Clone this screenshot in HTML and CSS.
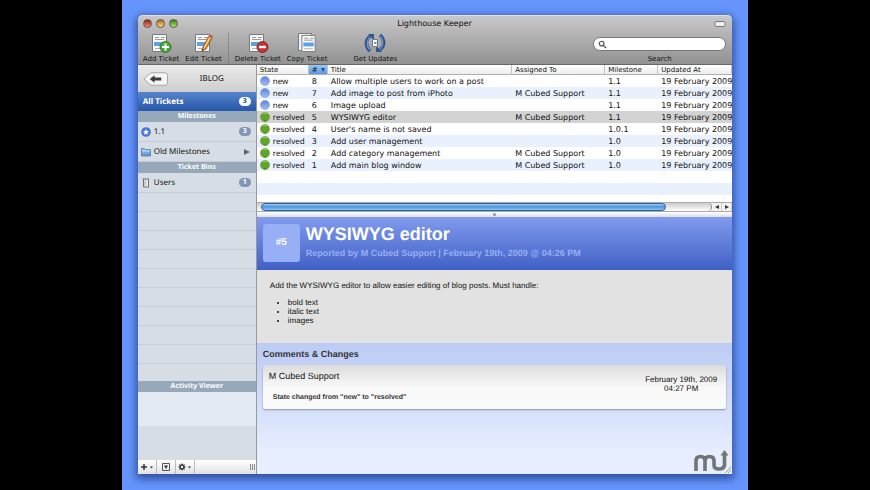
FILE: index.html
```html
<!DOCTYPE html>
<html lang="en">
<head>
<meta charset="utf-8">
<title>Lighthouse Keeper</title>
<link rel="stylesheet" href="styles.css">
</head>
<body>
<svg class="defs" aria-hidden="true">
  <defs>
    <linearGradient id="orb" x1="0" y1="0" x2="0" y2="1"><stop offset="0" stop-color="#5f84dc"/><stop offset="1" stop-color="#a3bdf8"/></linearGradient>
    <linearGradient id="fold" x1="0" y1="0" x2="0" y2="1"><stop offset="0" stop-color="#a9cbee"/><stop offset="1" stop-color="#5c8fcc"/></linearGradient>
    <symbol id="page" viewBox="0 0 20 20">
      <path d="M2.500 1.500h14v17h-14z" fill="#f8f8f8" stroke="#77797c"/>
      <path d="M5 4.500h4M11 4.500h4M5 6.500h9" stroke="#9a9a9a"/>
      <path d="M4 9h11v4H4z" fill="#5da0e4"/>
      <path d="M5 15.500h9" stroke="#b0b0b0"/>
    </symbol>
    <symbol id="new" viewBox="0 0 10 10"><circle cx="5" cy="5" r="4.500" fill="url(#orb)" stroke="#6d8dda" stroke-width=".5"/></symbol>
    <symbol id="resolved" viewBox="0 0 10 10"><circle cx="5" cy="5" r="4.600" fill="#5fa52c" stroke="#7f9a3c" stroke-width=".6"/><path d="M3 1.500h4" stroke="#9acb62"/><path d="M4.500 9h1" stroke="#24500c"/></symbol>
  </defs>
</svg>
<div class="desktop">
<main class="window">
  <header class="chrome">
    <div class="titlebar">
      <div class="lights"><button class="light red" aria-label="Close"></button><button class="light yellow" aria-label="Minimize"></button><button class="light green" aria-label="Zoom"></button></div>
      <h1>Lighthouse Keeper</h1>
      <button class="pill" aria-label="Toggle toolbar"></button>
    </div>
    <div class="toolbar">
      <button class="tool"><svg viewBox="0 0 22 20"><use href="#page" width="20" height="20"/><circle cx="15.500" cy="14" r="5.500" fill="#4ba63b" stroke="#2f7d27"/><path d="M15.500 10.500v7M12 14h7" stroke="#fff" stroke-width="2"/></svg>Add Ticket</button>
      <button class="tool"><svg viewBox="0 0 22 20"><use href="#page" width="20" height="20"/><path d="M9 18l1-4 6-11 3 2-6 11z" fill="#e99a36" stroke="#854a20" stroke-width=".8"/><path d="M11.500 14.500l5.500-10.500" stroke="#ffe48c"/><path d="M16 3l1-1.500 3 1.500-1 2z" fill="#d45045"/><path d="M9 18l.5-2 1.200.8z" fill="#222"/></svg>Edit Ticket</button>
      <span class="divider"></span>
      <button class="tool"><svg viewBox="0 0 22 20"><use href="#page" width="20" height="20"/><circle cx="15.500" cy="14" r="5.500" fill="#c23530" stroke="#8f2522"/><path d="M12 14h7" stroke="#fff" stroke-width="2.400"/></svg>Delete Ticket</button>
      <button class="tool"><svg viewBox="0 0 22 20"><path d="M2.500.5h13v17h-13z" fill="#f3f3f3" stroke="#77797c"/><path d="M5 3.500h7" stroke="#aaa"/><use href="#page" x="3" y="1" width="20" height="19"/></svg>Copy Ticket</button>
      <button class="tool updates"><svg viewBox="0 0 22 20"><path d="M7 3C1 6 1 13 6 18M15 17c6-3 6-10 1-15" fill="none" stroke="#2e4f88" stroke-width="3.500"/><path d="M7 3C2 7 2 13 6 17M15 17c5-4 5-10 1-14" fill="none" stroke="#6c9ad8" stroke-width="1.200"/><path d="M4 1h6v6zM18 19h-6v-6z" fill="#31578f"/><path d="M8.500 6.500h5v7h-5z" fill="#fff" stroke="#777"/><path d="M10 10h2.500" stroke="#5da0e4" stroke-width="2"/></svg>Get Updates</button>
      <div class="search"><div class="field"><svg viewBox="0 0 10 10"><circle cx="4" cy="4" r="2.600" fill="none" stroke="#555" stroke-width="1.300"/><path d="M6 6l3 3" stroke="#555" stroke-width="1.500"/></svg><input id="q" type="text"></div><label for="q">Search</label></div>
    </div>
  </header>
  <div class="content">
    <nav class="sidebar">
      <div class="project"><button class="back" aria-label="Back"><svg viewBox="0 0 26 14"><path d="M1 7L7 1.500Q8 .5 10 .5h13q2.500 0 2.500 2.500v8q0 2.500-2.500 2.500H10q-2 0-3-1z" fill="#f6f6f6" stroke="#a2a2a2"/><path d="M7 7l5-4v2.500h7v3h-7V11z" fill="#3c3c3c"/></svg></button><span>IBLOG</span></div>
      <a class="item all" href="#all"><span>All Tickets</span><b class="badge">3</b></a>
      <h2>Milestones</h2>
      <a class="item" href="#m11"><svg viewBox="0 0 10 10"><circle cx="5" cy="5" r="4.800" fill="#4673dc"/><path d="M5 2l.9 2 2.200.2-1.700 1.400.5 2.200L5 6.700 3.100 7.800l.5-2.200L1.900 4.200 4.100 4z" fill="#fff"/></svg><span>1.1</span><b class="badge">3</b></a>
      <a class="item" href="#old"><svg viewBox="0 0 10 10"><path d="M.5 9V1.500h3l1 1h5V9z" fill="url(#fold)" stroke="#4b78ad" stroke-width=".8"/><path d="M1 4h8" stroke="#c8e0f8" stroke-width=".8"/></svg><span>Old Milestones</span><i class="more"></i></a>
      <h2>Ticket Bins</h2>
      <a class="item" href="#users"><svg viewBox="0 0 10 10"><path d="M1.500 1h6.500M2.500 1v8h5V1" fill="#e8e8e8" stroke="#727272"/><path d="M4 2.500v5" stroke="#aaa"/></svg><span>Users</span><b class="badge">1</b></a>
      <div class="empty"></div>
      <h2>Activity Viewer</h2>
      <div class="activity"></div>
      <div class="spare"></div>
      <div class="actions">
        <button aria-label="Add"><svg viewBox="0 0 14 8"><path d="M4 1v6M1 4h6" stroke="#333" stroke-width="1.500"/><path d="M10 3.500h3l-1.500 2z" fill="#333"/></svg></button>
        <button aria-label="Show panel"><svg viewBox="0 0 14 8"><path d="M3.500.5h7v7h-7z" fill="none" stroke="#555"/><path d="M5 2.500h4L7 6z" fill="#333"/></svg></button>
        <button aria-label="Settings"><svg viewBox="0 0 14 8"><circle cx="4" cy="4" r="2" fill="none" stroke="#333" stroke-width="1.500"/><path d="M4 .5v1.500M4 6v1.500M.5 4H2M6 4h1.500M1.500 1.500l1 1M5.500 5.500l1 1M6.500 1.500l-1 1M2.500 5.500l-1 1" stroke="#333"/><path d="M10 3.500h3l-1.500 2z" fill="#333"/></svg></button>
        <i class="grip"></i>
      </div>
    </nav>
    <section class="main">
      <div class="list">
        <table>
          <colgroup><col class="c-state"><col class="c-num"><col><col class="c-who"><col class="c-mile"><col class="c-date"></colgroup>
          <thead><tr><th>State</th><th class="sorted"><span>#</span><i></i></th><th>Title</th><th>Assigned To</th><th>Milestone</th><th>Updated At</th></tr></thead>
          <tbody>
            <tr><td><svg><use href="#new"/></svg>new</td><td>8</td><td>Allow multiple users to work on a post</td><td></td><td>1.1</td><td>19 February 2009</td></tr>
            <tr><td><svg><use href="#new"/></svg>new</td><td>7</td><td>Add image to post from iPhoto</td><td>M Cubed Support</td><td>1.1</td><td>19 February 2009</td></tr>
            <tr><td><svg><use href="#new"/></svg>new</td><td>6</td><td>Image upload</td><td></td><td>1.1</td><td>19 February 2009</td></tr>
            <tr class="selected"><td><svg><use href="#resolved"/></svg>resolved</td><td>5</td><td>WYSIWYG editor</td><td>M Cubed Support</td><td>1.1</td><td>19 February 2009</td></tr>
            <tr><td><svg><use href="#resolved"/></svg>resolved</td><td>4</td><td>User's name is not saved</td><td></td><td>1.0.1</td><td>19 February 2009</td></tr>
            <tr><td><svg><use href="#resolved"/></svg>resolved</td><td>3</td><td>Add user management</td><td></td><td>1.0</td><td>19 February 2009</td></tr>
            <tr><td><svg><use href="#resolved"/></svg>resolved</td><td>2</td><td>Add category management</td><td>M Cubed Support</td><td>1.0</td><td>19 February 2009</td></tr>
            <tr><td><svg><use href="#resolved"/></svg>resolved</td><td>1</td><td>Add main blog window</td><td>M Cubed Support</td><td>1.0</td><td>19 February 2009</td></tr>
          </tbody>
        </table>
        <div class="blank"></div>
      </div>
      <div class="scroll"><div class="track"><div class="thumb"></div></div><button aria-label="Scroll left"><i class="left"></i></button><button aria-label="Scroll right"><i class="right"></i></button></div>
      <div class="splitter"><i></i></div>
      <header class="ticket"><div class="number">#5</div><div><h2>WYSIWYG editor</h2><p>Reported by M Cubed Support | February 19th, 2009 @ 04:26 PM</p></div></header>
      <article class="body"><p>Add the WYSIWYG editor to allow easier editing of blog posts. Must handle:</p><ul><li>bold text</li><li>italic text</li><li>images</li></ul></article>
      <section class="comments">
        <h3>Comments &amp; Changes</h3>
        <div class="card"><div><h4>M Cubed Support</h4><p>State changed from "new" to "resolved"</p></div><time>February 19th, 2009<br>04:27 PM</time></div>
      </section>
    </section>
  </div>
  <svg class="mark" viewBox="0 0 39 25" aria-hidden="true"><path d="M3 22V12q0-4.500 4.500-4.500t4.500 4.500v10M12 12q0-4.500 4.500-4.500t4.500 4.500v4q0 4 5 4t5.500-4V5" fill="none" stroke="#747474" stroke-width="3.600"/><path d="M27.500 6.500l4-5.500 4 5.500z" fill="#747474"/><path d="M32 24l6-6M35 24l3-3" stroke="#999"/></svg>
</main>
</div>
</body>
</html>
```
FILE: styles.css
```css
* { box-sizing: border-box; }
body { margin: 0; background: #000; font: 9px/12px "DejaVu Sans", sans-serif; color: #111; text-rendering: geometricPrecision; }
h1, h2, h3, h4, p, ul { margin: 0; }
button { border: 0; padding: 0; background: none; font: inherit; color: inherit; }
a { color: inherit; text-decoration: none; }
svg { display: block; flex: none; }
.defs { position: absolute; width: 0; height: 0; }
.desktop { min-height: 100vh; margin: 0 14%; padding: 15px 16px 16px; background: #6595fc; display: flex; }
.window { position: relative; flex: 1; min-width: 0; display: flex; flex-direction: column; border-radius: 5px 5px 0 0; box-shadow: 0 3px 9px 2px rgba(12, 32, 95, .6); }

.chrome { border-radius: 5px 5px 0 0; background: linear-gradient(#c9c9c9, #929292); border-bottom: 1px solid #666; }
.titlebar { display: grid; grid-template-columns: 1fr auto 1fr; align-items: center; height: 16px; padding: 0 6px 0 5px; border-top: 1px solid #e2e2e2; border-radius: 5px 5px 0 0; }
.titlebar h1 { font-size: 8px; line-height: 12px; font-weight: 400; }
.lights { display: flex; gap: 4px; }
.light { width: 9px; height: 9px; border-radius: 50%; border: 1px solid #654; }
.red { background: linear-gradient(#8f1e18, #f08b78); }
.yellow { background: linear-gradient(#b3631c, #f7e27a); }
.green { background: linear-gradient(#3a781f, #a9ec6a); }
.pill { justify-self: end; width: 12px; height: 6px; border: 1px solid #777; border-radius: 3px; background: #eee; }
.toolbar { display: flex; gap: 6px; padding: 2px 6px 0 5px; font-size: 7px; line-height: 10px; }
.tool { display: flex; flex-direction: column; align-items: center; gap: 1px; white-space: nowrap; }
.tool svg { width: 22px; height: 20px; }
.divider { border-left: 1px dotted #6d6d6d; }
.updates { margin-left: 20px; }
.search { margin-left: auto; width: 133px; display: flex; flex-direction: column; justify-content: space-between; padding-top: 4px; text-align: center; }
.field { display: flex; align-items: center; height: 14px; padding: 0 4px; border: 1px solid #777; border-radius: 7px; background: #fff; }
.field svg { width: 9px; height: 9px; }
.field input { flex: 1; min-width: 0; border: 0; padding: 0 3px; height: 10px; background: none; font: inherit; outline: 0; }

.content { flex: 1; display: grid; grid-template-columns: 119px minmax(0, 1fr); background: #fff; }
.sidebar { display: flex; flex-direction: column; background: #d6dde5; border-right: 1px solid #999; font-family: "Noto Sans", sans-serif; font-size: 8px; }
.project { display: flex; align-items: center; height: 27px; padding-left: 5px; background: linear-gradient(#ececec, #cdcdcd); }
.project span { flex: 1; text-align: center; }
.back svg { width: 25px; height: 14px; }
.item { display: flex; align-items: center; gap: 3px; height: 20px; padding: 0 5px 0 3px; border-bottom: 1px solid #c6ccd4; }
.item svg { width: 10px; height: 10px; }
.item span { flex: 1; }
.all { height: 19px; padding-left: 5px; border: 0; background: linear-gradient(#5585cb, #2757a9); color: #fff; font-weight: 700; }
.badge { min-width: 12px; border-radius: 5px; background: #8095b8; color: #fff; font-size: 7px; line-height: 9px; text-align: center; }
.all .badge { background: #fff; color: #3c66ad; }
.more { border: solid transparent; border-width: 3px 0 3px 6px; border-left-color: #666; margin-right: 1px; }
.sidebar h2 { background: #98a8bb; color: #fff; font-size: 7px; line-height: 11px; text-align: center; }
.empty { flex: 1; background: repeating-linear-gradient(#d6dde5 0 18px, #c8ced7 18px 19px); }
.activity { height: 34px; background: #e3eaf3; }
.spare { height: 34px; }
.actions { display: flex; height: 14px; background: linear-gradient(#fff, #e2e2e2); }
.actions button { width: 19px; border-right: 1px solid #bbb; display: grid; place-items: center; }
.actions svg { width: 14px; height: 8px; }
.grip { margin: 4px 1px 4px auto; width: 5px; border: solid #888; border-width: 0 1px; background: linear-gradient(90deg, transparent 1px, #888 1px 2px, transparent 2px); }

.main { display: flex; flex-direction: column; min-width: 0; }
.list { overflow: hidden; height: 137px; }
table { width: 100%; border-collapse: collapse; table-layout: fixed; white-space: nowrap; }
.c-state { width: 52px; }
.c-num { width: 19px; }
.c-who { width: 93px; }
.c-mile { width: 53px; }
.c-date { width: 74px; }
th { height: 10px; padding: 0 3px; font-size: 7px; line-height: 10px; font-weight: 400; text-align: left; background: linear-gradient(#fff, #ebebeb); box-shadow: inset -1px 0 #c4c4c4, inset 0 -1px #b0b0b0; }
.sorted { background: linear-gradient(#9bc5f2, #5193e0); }
.sorted i { display: inline-block; border: solid transparent; border-width: 4px 2px 0; border-top-color: #234f91; margin-left: 3px; }
td { height: 12px; padding: 1px 3px 0; font-size: 8px; line-height: 11px; vertical-align: top; }
td svg { display: inline-block; width: 10px; height: 10px; margin: -2px 3px -2px 0; vertical-align: -4px; vertical-align: 0; }
td:first-child { font-family: "Noto Sans", sans-serif; }
td:last-child { padding-right: 0; }
tbody tr:nth-child(even) { background: #eaf1fe; }
tbody tr.selected { background: #d3d3d3; }
.blank { height: 48px; background: repeating-linear-gradient(#fff 0 12px, #eaf1fe 12px 24px); }
.scroll { display: flex; height: 10px; background: #f2f2f2; border-top: 1px solid #aaa; border-bottom: 1px solid #aaa; }
.track { flex: 1; padding-left: 4px; background: linear-gradient(#ccc, #fff); border-radius: 0 5px 5px 0; border-right: 1px solid #888; }
.thumb { width: 90%; height: 8px; border-radius: 4px; border: 1px solid #315fad; background: linear-gradient(#a3cdf5, #4c93dc 45%, #83cbf7); }
.scroll button { width: 10px; display: grid; place-items: center; border-right: 1px solid #ccc; }
.left, .right { border: solid transparent; }
.left { border-width: 2px 4px 2px 0; border-right-color: #333; }
.right { border-width: 2px 0 2px 4px; border-left-color: #333; }
.splitter { height: 5px; display: grid; place-items: center; background: linear-gradient(#fff, #ddd); }
.splitter i { width: 3px; height: 3px; border-radius: 50%; background: #999; }
.ticket, .body, .comments { font-family: "Liberation Sans", sans-serif; }
.ticket { display: flex; gap: 6px; height: 53px; padding: 7px 6px; background: linear-gradient(#819bed, #4060c6); color: #fff; }
.number { width: 37px; height: 38px; border-radius: 3px; background: #97aff4; display: grid; place-items: center; font-size: 10px; font-weight: 700; }
.ticket h2 { font-size: 18px; line-height: 20px; }
.ticket p { margin-top: 3px; font-size: 9px; line-height: 12px; font-weight: 700; color: #97aff4; }
.body { height: 73px; padding: 11px 13px; background: #e2e2e2; font-size: 8px; line-height: 9px; }
.body ul { margin-top: 8px; padding-left: 18px; }
.comments { flex: 1; padding: 5px 6px; background: linear-gradient(#bccbf5, #e7eeff 85%); }
.comments h3 { font-size: 9px; line-height: 12px; color: #333; }
.card { display: flex; justify-content: space-between; margin-top: 5px; height: 44px; padding: 5px 9px 5px 6px; border-radius: 3px; background: linear-gradient(#dcdcdc, #f8f8f8 50%, #fafafa); box-shadow: 0 1px 2px rgba(0, 0, 0, .35); }
.card h4 { font-size: 9px; line-height: 12px; font-weight: 400; }
.card p { margin: 11px 0 0 4px; font-size: 7px; line-height: 10px; font-weight: 700; color: #333; }
.card time { padding-top: 5px; font-size: 8px; line-height: 9px; text-align: center; }
.mark { position: absolute; right: 0; bottom: 0; width: 39px; height: 25px; }
```
